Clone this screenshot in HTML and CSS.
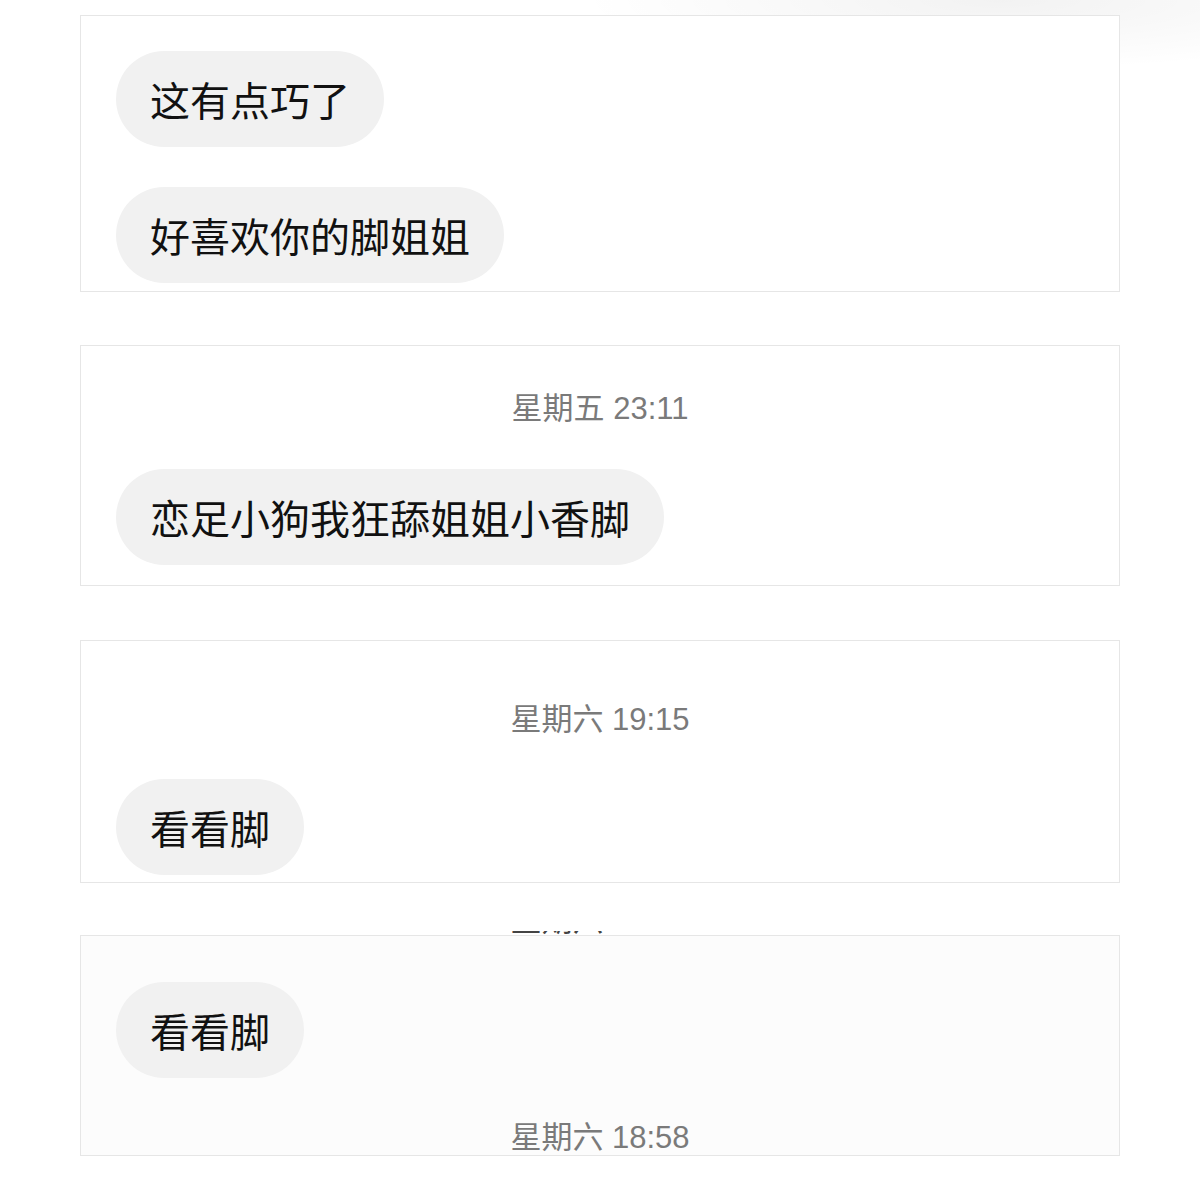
FILE: index.html
```html
<!DOCTYPE html>
<html>
<head>
  <meta charset="UTF-8">
  <title>聊天记录</title>
  <link rel="stylesheet" href="styles.css">
</head>
<body>
    <div class="Capturas">

        <div class="tarjeta t1">
            <div class="burbuja">这有点巧了</div>
            <div class="burbuja sep">好喜欢你的脚姐姐</div>
        </div>

        <div class="tarjeta t2">
            <div class="hora">星期五 23:11</div>
            <div class="burbuja sep">恋足小狗我狂舔姐姐小香脚</div>
        </div>

        <div class="tarjeta t3">
            <div class="hora">星期六 19:15</div>
            <div class="burbuja sep">看看脚</div>
        </div>

        <div class="bloque">
            <div class="hora-cortada"><span>星期六 18:54</span></div>
            <div class="tarjeta t4">
                <div class="burbuja">看看脚</div>
                <div class="hora abajo">星期六 18:58</div>
            </div>
        </div>

    </div>
</body>
</html>
```

FILE: styles.css
```css
body {
    margin: 0;
    font-family: "Noto Sans CJK SC", sans-serif;
    background-color: white;
    background-image: radial-gradient(ellipse 420px 70px at 1000px 0px, rgba(0, 0, 0, 0.05), rgba(0, 0, 0, 0));
    background-repeat: no-repeat;
    min-height: 1182px;
}

.Capturas{
    display: flex;
    flex-direction: column;
    gap: 53px;
    width: 1040px;
    padding-top: 15px;
    margin-left: 80px;
}

.tarjeta{
    box-sizing: border-box;
    border: 1.5px solid #e6e6e6;
    background-color: white;
    padding-left: 35px;
    overflow: hidden;
    display: flex;
    flex-direction: column;
    align-items: flex-start;
}

.t1{
    height: 277px;
    padding-top: 35px;
}

.t2{
    height: 241px;
    padding-top: 43px;
}

.t3{
    height: 243px;
    margin-top: 1px;
    padding-top: 59px;
}

.bloque{
    margin-top: -5px;
}

.t4{
    height: 221px;
    margin-top: -1px;
    padding-top: 46px;
    background-color: #fcfcfc;
}

.burbuja{
    height: 96px;
    line-height: 96px;
    padding: 0 34px;
    border-radius: 48px;
    background-color: #f1f1f1;
    color: #111;
    font-size: 40px;
    white-space: nowrap;
}

.sep{
    margin-top: 40px;
}

.t3 .sep{
    margin-top: 39px;
}

.hora{
    align-self: stretch;
    margin-left: -35px;
    text-align: center;
    font-family: "Liberation Sans", "Noto Sans CJK SC", sans-serif;
    font-size: 31px;
    line-height: 40px;
    color: #7a7a7a;
}

/* la hora anterior queda casi fuera de la captura */
.hora-cortada{
    height: 5px;
    overflow: hidden;
    text-align: center;
    font-family: "Liberation Sans", "Noto Sans CJK SC", sans-serif;
    font-size: 31px;
    color: #444;
}

.hora-cortada span{
    display: block;
    line-height: 36px;
    transform: translateY(-28px);
}

.abajo{
    margin-top: 40px;
}
```
